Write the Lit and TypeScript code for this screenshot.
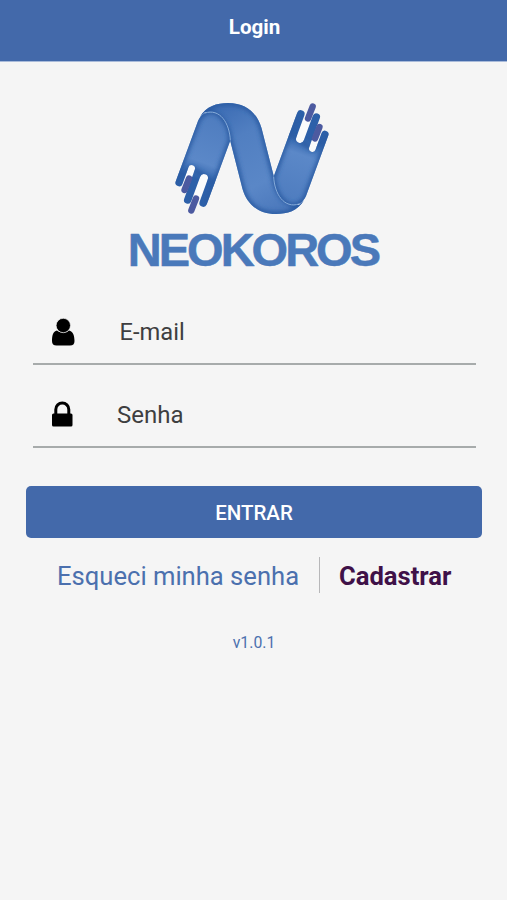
import { LitElement, html, css, svg } from "lit";
import { customElement } from "lit/decorators.js";

const LEG =
  "M175.700 181.500 L198 121 C203 110 214 108.500 222 117 C228 124 230.500 132 230.500 140 L206.700 204.500 A3.800 3.800 0 0 1 199.600 201.800 L207.700 179.500 A4 4 0 0 0 200.200 176.700 L191.200 201.300 A3.700 3.700 0 0 1 184.200 198.700 L194.800 169.700 A3.400 3.400 0 0 0 188.400 167.400 L182.500 183.900 A3.600 3.600 0 0 1 175.700 181.500 Z";
const BAND =
  "M200 117 C206 106 217 103 228 103 C246 103 257 113 261.500 128 L274 177 C276 192 284 205 299 205 L304 200 C298 211 287 214 276 214 C258 214 247 204 242.500 189 L230 140 C228 125 220 112 205 112 Z";

const half = svg`
  <g stroke-linecap="round" fill="none">
    <path stroke="#fafbfc" stroke-width="6.500" d="M191.500 169 L187.500 179"/>
    <path stroke="#fafbfc" stroke-width="8" d="M203.900 178.500 L198.500 193"/>
    <path d=${LEG} fill="url(#leg)"/>
    <g clip-path="url(#legClip)">
      <path d="M174 184 L198 121 C203 110 214 108.500 222 117 C228 124 230.500 132 230.500 140 L208 202" stroke="#2a5ba3" stroke-width="5" filter="url(#soft)"/>
      <path d="M181 176 L192 168 L204 176 L215 184" stroke="#2a5ba3" stroke-width="4" filter="url(#soft)"/>
    </g>
    <path stroke="#4c5aa0" stroke-width="6.300" d="M189 178.500 L184.500 190"/>
    <path stroke="#4c5aa0" stroke-width="6.300" d="M196 198.500 L191.300 210.500"/>
    <path d="M205 113 C220 108 229.500 123 230.300 140" stroke="#86abd9" stroke-width="1"/>
  </g>`;

@customElement("app-logo")
export class AppLogo extends LitElement {
  static styles = css`
    :host { display: block; height: 175px; }
    svg { display: block; overflow: visible; }
    .word { font: bold 47px "Liberation Sans", Arial, sans-serif; letter-spacing: -3px; fill: #4a79ba; stroke: #4a79ba; stroke-width: 0.5; stroke-linejoin: round; }
  `;
  render() {
    return html`<svg width="287" height="185" viewBox="112 98 287 185" role="img" aria-label="Neokoros">
      <defs>
        <linearGradient id="leg" gradientUnits="userSpaceOnUse" x1="215" y1="110" x2="191" y2="177">
          <stop offset="0" stop-color="#4d7bbe"/><stop offset=".75" stop-color="#5b88c8"/><stop offset="1" stop-color="#2d60a9"/>
        </linearGradient>
        <linearGradient id="band" gradientUnits="userSpaceOnUse" x1="220" y1="103" x2="284" y2="214">
          <stop offset="0" stop-color="#3b6bb3"/><stop offset=".3" stop-color="#517fc1"/><stop offset=".7" stop-color="#5a87c7"/><stop offset="1" stop-color="#4976ba"/>
        </linearGradient>
        <filter id="soft" x="-20%" y="-30%" width="140%" height="160%"><feGaussianBlur stdDeviation="2"/></filter>
        <clipPath id="legClip"><path d=${LEG}/></clipPath>
        <clipPath id="bandClip"><path d=${BAND}/></clipPath>
      </defs>
      <path d=${BAND} fill="url(#band)"/>
      <g clip-path="url(#bandClip)">
        <path d=${BAND} fill="none" stroke="#2a5ba3" stroke-width="5" filter="url(#soft)"/>
      </g>
      ${half}
      <g transform="rotate(180 252 158.500)">${half}</g>
      <text class="word" x="127.800" y="266">NEOKOROS</text>
    </svg>`;
  }
}

@customElement("app-root")
export class AppRoot extends LitElement {
  static styles = css`
    :host { display: flex; flex-direction: column; height: 900px; background: #f5f5f5; font-family: Roboto, "Liberation Sans", sans-serif; overflow: hidden; }
    * { box-sizing: border-box; }
    header { height: 62px; padding-top: 15px; background: #4369aa; border-bottom: 1px solid #a9bbda; color: #fff; text-align: center; font-size: 20.6px; line-height: 24px; font-weight: 700; padding-left: 2px; }
    app-logo { margin: 36px 0 0 112px; }
    .field { display: flex; align-items: center; margin: 0 31px 0 33px; color: #3e3e40; font-size: 24px; line-height: 28px; border-bottom: 2px solid #a7abab; white-space: nowrap; }
    .mail { height: 64px; margin-top: 28px; }
    .pass { height: 83px; padding-top: 18px; }
    .icon { width: 24px; height: 30px; margin-left: 18px; flex: none; }
    .mail .label { margin-left: 44.5px; font-size: 23.7px; }
    .pass .label { margin-left: 42px; }
    .enter { height: 52px; margin: 38px 25px 0 26px; border: 0; border-radius: 5px; background: #4369aa; color: #fff; font: 500 20.5px/24px Roboto, sans-serif; padding: 2px 0 0 0; }
    .links { display: flex; align-items: center; height: 36px; margin-top: 19px; padding-left: 57px; font-size: 25.6px; line-height: 30px; }
    .forgot { color: #4b70ae; width: 242px; white-space: nowrap; padding-top: 2px; }
    .divider { width: 1px; height: 36px; background: #b7b7b9; margin: 0 19px 0 20px; }
    .signup { color: #3f1148; font-weight: 700; white-space: nowrap; padding-top: 2px; }
    .version { margin-top: 40px; padding-left: 1px; text-align: center; color: #4b70ae; font-size: 15.8px; line-height: 20px; }
  `;
  render() {
    return html`
      <header>Login</header>
      <app-logo></app-logo>
      <div class="field mail">
        <svg class="icon" viewBox="0 0 24 30"><path d="M6 13.500 C8 16 16 16 18 13.500 C22 14 23.500 19 23.500 24 C23.500 27 22 28.500 19 28.500 H5.500 C2.500 28.500 1 27 1 24 C1 19 2 14 6 13.500 Z"/><circle cx="12.300" cy="8.500" r="7.200" stroke="#f5f5f5" stroke-width=".7"/></svg>
        <span class="label">E-mail</span>
      </div>
      <div class="field pass">
        <svg class="icon" viewBox="0 0 24 30"><rect x="1" y="13.500" width="20.500" height="13" rx="1.500"/><path d="M4.800 15 V9.500 A6.500 6.500 0 0 1 17.800 9.500 V15" fill="none" stroke="#000" stroke-width="3"/></svg>
        <span class="label">Senha</span>
      </div>
      <button class="enter">ENTRAR</button>
      <div class="links">
        <span class="forgot">Esqueci minha senha</span><span class="divider"></span><span class="signup">Cadastrar</span>
      </div>
      <div class="version">v1.0.1</div>
    `;
  }
}
